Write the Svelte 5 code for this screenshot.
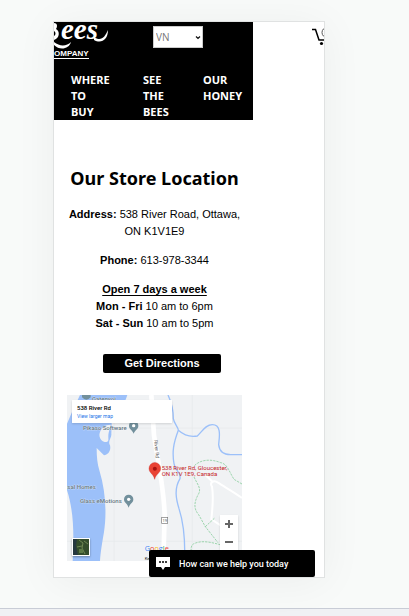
<script>
  const links = ['Where to buy', 'See the bees', 'Our honey'];
  const hours = [
    { days: 'Mon - Fri', time: '10 am to 6pm' },
    { days: 'Sat - Sun', time: '10 am to 5pm' }
  ];
  let region = $state('VN');
</script>

<div class="page">
  <main class="frame">
    <header class="top">
      <div class="banner">
        <div class="brand-row">
          <a class="logo" href="#home" aria-label="Bees Company">
            <svg viewBox="0 0 56 38" width="56" height="38">
              <path d="M0 1C3 1 4 4 2 7C6 9 6 16 0 18V14C2 13 2 10 0 9Z" />
              <text class="script" x="7" y="17">ees</text>
              <path d="M40 15C47 20 51 15 54 8C54 18 47 22 40 18Z" />
              <path d="M0 20C6 25 13 24 17 20C15 27 6 29 0 23Z" />
              <text class="company" x="0" y="34">OMPANY</text>
              <path class="rule" d="M0 36.500H35" />
            </svg>
          </a>
          <div class="picker">
            <select aria-label="Region" bind:value={region}>
              <option>VN</option>
              <option>CA</option>
            </select>
            <svg viewBox="0 0 6 4" width="6" height="4" fill="none" stroke="#111">
              <path d="M1 .5L3 2.500 5 .5" stroke-width="1.200" />
            </svg>
          </div>
        </div>
        <nav>
          {#each links as link}
            <a href="#{link}">{link}</a>
          {/each}
        </nav>
      </div>
      <button class="cart" aria-label="Cart">
        <svg viewBox="0 0 13 20" width="13" height="20" fill="none" stroke="#000">
          <path d="M1 3.500H4.500L8 14H13" stroke-width="1.500" />
          <circle cx="10.500" cy="17.500" r="1.600" fill="#000" stroke="none" />
          <circle cx="16" cy="6.500" r="5" stroke="#555" />
        </svg>
      </button>
    </header>

    <section class="store">
      <h1>Our Store Location</h1>
      <p><b>Address:</b> 538 River Road, Ottawa, ON K1V1E9</p>
      <p><b>Phone:</b> 613-978-3344</p>
      <p>
        <b class="open">Open 7 days a week</b>
        {#each hours as row}
          <br /><b>{row.days}</b> {row.time}
        {/each}
      </p>
      <button class="directions">Get Directions</button>

      <div class="map">
        <svg class="tiles" viewBox="9 9 525 498" preserveAspectRatio="xMidYMid slice">
          <rect x="9" y="9" width="525" height="498" fill="#f0f2f4" />
          <path d="M9 108H534M9 448H534M150 9V507M385 9V507" stroke="#e6e9eb" stroke-width="2" />
          <path class="water" d="M48 9H190C182 35 160 75 143 93L142 125C144 138 130 146 138 160C142 176 132 188 120 190L98 168C98 195 100 215 106 235C126 300 128 370 120 420C114 455 110 480 108 507H26C30 430 30 360 9 295V95L24 60Z" />
          <path d="M140 98L134 122C130 140 140 150 122 150C106 146 98 124 118 106C124 100 132 98 140 98Z" fill="#f0f2f4" />
          <path class="stream" d="M312 9C322 30 328 60 328 80C330 95 343 105 343 115C328 155 324 180 330 215C332 240 352 235 348 260C330 290 336 320 345 350C358 390 364 440 362 507" />
          <path class="stream" d="M343 115C360 130 380 136 400 132C415 118 425 98 445 98C475 98 465 140 464 158C466 178 480 188 500 188H534" />
          <path class="road" d="M262 9L270 130C284 220 300 290 302 370L298 507" />
          <path class="road minor" d="M534 318C510 300 480 284 462 272C448 262 436 272 444 284C450 320 444 360 442 382L470 400M444 268L425 250" />
          <path class="trail" d="M534 276L510 262C496 240 490 215 470 212C440 200 410 202 390 222M390 255C402 280 412 290 404 305C390 330 388 350 404 368L424 404L462 452M424 404L452 378M388 507C380 480 378 462 388 456C410 444 440 450 468 458" />
          <g class="pin">
            <path d="M209 125C204 112 195 112 195 101A14 14 0 0 1 223 101C223 112 214 112 209 125Z" />
            <path d="M194 347C189 333 180 333 180 322A14 14 0 0 1 208 322C208 333 199 333 194 347Z" />
            <path d="M54 9H80V16Q67 30 54 16Z" />
            <circle cx="209" cy="101" r="5" fill="#fff" />
            <circle cx="194" cy="322" r="5" fill="#fff" />
          </g>
          <g class="place">
            <text x="84" y="26">Gatenvoi</text>
            <text x="57" y="113">Pikaso Software</text>
            <text x="10" y="291">sal Homes</text>
            <text x="48" y="334">Glass eMotions</text>
          </g>
          <text class="street" transform="translate(270 145) rotate(84)">River Rd</text>
          <g class="shield">
            <rect x="293" y="376" width="18" height="18" />
            <text x="302" y="390" text-anchor="middle">19</text>
          </g>
          <path d="M272 262C268 244 255 244 255 229A17.500 17.500 0 0 1 290 229C290 244 276 244 272 262Z" fill="#e94335" stroke="#c5221f" />
          <circle cx="272.500" cy="230" r="6" fill="#a81411" />
          <g class="target">
            <text x="293" y="234">538 River Rd, Gloucester,</text>
            <text x="293" y="253">ON K1V 1E9, Canada</text>
          </g>
          <text class="google" x="242" y="478"><tspan fill="#4285f4">G</tspan><tspan fill="#ea4335">o</tspan><tspan fill="#fbbc05">o</tspan><tspan fill="#4285f4">g</tspan><tspan fill="#34a853">l</tspan><tspan fill="#ea4335">e</tspan></text>
          <text class="keys" x="242" y="503">Ke</text>
        </svg>
        <div class="card">
          <b>538 River Rd</b>
          <a href="#map">View larger map</a>
        </div>
        <button class="satellite" aria-label="Satellite view">
          <svg viewBox="0 0 16 16" width="16" height="16">
            <rect width="16" height="16" fill="#344d2c" />
            <path d="M0 0H4L3 7 5 16H0Z" fill="#26383f" />
            <path d="M6 1L10 4 9 9 12 15M4 8L9 7M11 2L15 5" stroke="#6f8753" fill="none" />
            <path d="M6 10H10V14H6Z" fill="#5c7946" />
          </svg>
        </button>
        <div class="zoom">
          <button aria-label="Zoom in"><svg viewBox="0 0 10 10" width="10" height="10"><path d="M1 5H9M5 1V9" /></svg></button>
          <button aria-label="Zoom out"><svg viewBox="0 0 10 10" width="10" height="10"><path d="M1 5H9" /></svg></button>
        </div>
      </div>
    </section>

    <button class="chat">
      <svg viewBox="0 0 14 13" width="14" height="13">
        <path d="M0 0H14V10H9L7 13 5 10H0Z" fill="#fff" />
        <path d="M3 5H5M6 5H8M9 5H11" stroke="#000" stroke-width="1.500" />
      </svg>
      <span>How can we help you today</span>
    </button>
  </main>
</div>
<footer></footer>

<style>
  :global(body) {
    background: #f0f1f4;
  }
  .page {
    padding: 21px 84px 30px 53px;
    background: #f8faf9;
    border-bottom: 1px solid #c8ccd6;
  }
  footer {
    height: 7px;
  }
  .frame {
    position: relative;
    overflow: hidden;
    padding-bottom: 16px;
    border: 1px solid #e0e2e2;
    background: #fff;
    box-shadow: 0 4px 40px #0000000d;
    font-family: "Liberation Sans", Arial, sans-serif;
    font-size: 11px;
    line-height: 17px;
    color: #000;
  }
  .top {
    display: flex;
    justify-content: space-between;
    align-items: flex-start;
  }
  .banner {
    flex: 0 0 199px;
    background: #000;
  }
  .brand-row {
    display: flex;
    justify-content: space-between;
    align-items: flex-start;
    padding-right: 50px;
  }
  .logo svg {
    display: block;
    fill: #fff;
  }
  .script {
    font: italic bold 29px "Liberation Serif", serif;
  }
  .company {
    font: bold 8px "Liberation Sans", sans-serif;
  }
  .rule {
    stroke: #fff;
  }
  .picker {
    position: relative;
    margin-top: 4px;
  }
  .picker svg {
    position: absolute;
    right: 2px;
    top: 10px;
    pointer-events: none;
  }
  select {
    display: block;
    appearance: none;
    width: 50px;
    height: 22px;
    padding: 0 2px;
    border: 1px solid #ccc;
    border-radius: 0;
    background: #fff;
    color: #777;
    font: 10px "Open Sans", sans-serif;
  }
  nav {
    display: grid;
    grid-template-columns: 72px 60px 1fr;
    padding: 12px 0 0 17px;
  }
  nav a {
    width: min-content;
    color: #fff;
    font: bold 11px/16px "Noto Sans", sans-serif;
    text-transform: uppercase;
    text-decoration: none;
  }
  button {
    border: 0;
    padding: 0;
    background: none;
    cursor: pointer;
  }
  .cart {
    margin-top: 4px;
    height: 20px;
  }
  svg {
    display: block;
  }
  .store {
    width: 175px;
    padding: 44px 0 0 13px;
    text-align: center;
  }
  h1 {
    margin: 0 0 14px;
    font: bold 18px/28px "Noto Sans", sans-serif;
    white-space: nowrap;
  }
  p {
    margin: 0 0 12px;
  }
  .open {
    text-decoration: underline;
    text-underline-offset: 2px;
  }
  .directions {
    display: block;
    width: 118px;
    height: 19px;
    margin: 22px 0 22px 36px;
    padding-bottom: 2px;
    border-radius: 2px;
    background: #000;
    color: #fff;
    font: bold 11px "Liberation Sans", sans-serif;
  }
  .map {
    position: relative;
    overflow: hidden;
  }
  .tiles {
    width: 100%;
  }
  .water {
    fill: #9cc0f9;
  }
  .stream,
  .road,
  .trail {
    fill: none;
  }
  .stream {
    stroke: #9cc0f9;
    stroke-width: 4px;
  }
  .road {
    stroke: #fff;
    stroke-width: 14px;
  }
  .road.minor {
    stroke-width: 6px;
  }
  .trail {
    stroke: #72c58a;
    stroke-width: 2px;
    stroke-dasharray: 7 3;
  }
  .pin {
    fill: #72909c;
  }
  .place {
    fill: #5f7480;
    stroke: #fffa;
    stroke-width: 2px;
    paint-order: stroke;
    font: 500 18px Roboto, sans-serif;
  }
  .street {
    fill: #555;
    font: 15px Roboto, sans-serif;
  }
  .shield rect {
    fill: #fff;
    stroke: #777;
    stroke-width: 2px;
  }
  .shield text {
    fill: #555;
    font: 12px Roboto, sans-serif;
  }
  .target {
    fill: #c5221f;
    font: 18px Roboto, sans-serif;
  }
  .google {
    font: 22px "Open Sans", sans-serif;
  }
  .keys {
    fill: #222;
    font: 13px Roboto, sans-serif;
  }
  .card {
    position: absolute;
    top: 5px;
    left: 5px;
    box-sizing: border-box;
    width: 100px;
    height: 23px;
    padding: 3px 5px;
    display: flex;
    flex-direction: column;
    background: #fff;
    box-shadow: 0 1px 2px #0002;
    text-align: left;
    font: 6px/9px Roboto, sans-serif;
  }
  .card b {
    font-weight: 500;
  }
  .card a {
    font-size: 5px;
    color: #1a73e8;
    text-decoration: none;
  }
  .satellite {
    position: absolute;
    left: 5px;
    bottom: 5px;
    border: 1px solid #fff;
    box-shadow: 0 1px 2px #0005;
  }
  .zoom {
    position: absolute;
    right: 4px;
    top: 120px;
    width: 18px;
    background: #fff;
    box-shadow: 0 1px 2px #0002;
  }
  .zoom button {
    display: grid;
    place-items: center;
    width: 100%;
    height: 18px;
  }
  .zoom path {
    stroke: #666;
    stroke-width: 2px;
  }
  .chat {
    position: absolute;
    right: 9px;
    bottom: 0;
    display: flex;
    align-items: center;
    gap: 9px;
    width: 166px;
    height: 27px;
    padding-left: 7px;
    border-radius: 2px;
    background: #000;
    color: #fff;
    font: 500 9px Roboto, sans-serif;
    white-space: nowrap;
  }
</style>
